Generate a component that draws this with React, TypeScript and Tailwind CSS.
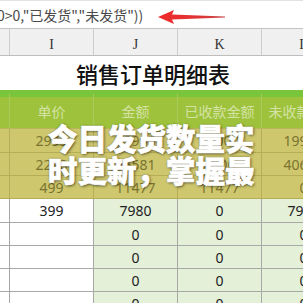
import React from 'react';

const cjk = "font-['Noto_Sans_CJK_SC','Noto_Sans',sans-serif]";
const num = "font-['Noto_Sans','Liberation_Sans',sans-serif]";

type Row = { cells: string[]; band: boolean; h: string };

const rows: Row[] = [
  { cells: ['2999', '29990', '10000', '19990'], band: true, h: 'h-[24px]' },
  { cells: ['2290', '45581', '4900', '40681'], band: true, h: 'h-[23px]' },
  { cells: ['499', '11477', '11477', '0'], band: true, h: 'h-[23px]' },
  { cells: ['399', '7980', '0', '7980'], band: false, h: 'h-[24px]' },
  { cells: ['', '0', '0', '0'], band: false, h: 'h-[23px]' },
  { cells: ['', '0', '0', '0'], band: false, h: 'h-[23px]' },
  { cells: ['', '0', '0', '0'], band: false, h: 'h-[23px]' },
  { cells: ['', '0', '0', '0'], band: false, h: 'h-[23px]' },
];

const RedArrow = () => (
  <svg width="67" height="16" viewBox="0 0 67 16" className="ml-[15px] mt-[4px] shrink-0">
    <defs>
      <linearGradient id="arrowFill" x1="0" y1="0" x2="1" y2="0">
        <stop offset="0" stopColor="#f02a2a" />
        <stop offset="0.6" stopColor="#e03434" />
        <stop offset="1" stopColor="#c84a4a" />
      </linearGradient>
    </defs>
    <path d="M0 8 L16 1 L14 5.6 L67 7.4 L67 8.4 L14 10.6 L16 15 Z" fill="url(#arrowFill)" />
  </svg>
);

export default function App() {
  return (
    <div className="relative w-[303px] h-[303px] overflow-hidden bg-white">
      {/* formula bar */}
      <div className="flex items-center h-[29px] border-t border-b border-t-[#e2e2e2] border-b-[#c4c4c4] bg-white">
        <span className={`${cjk} text-[14px] text-[#4a4a4a] whitespace-nowrap -ml-[3px] pt-[2px]`}>
          0&gt;0,"已发货","未发货"))
        </span>
        <RedArrow />
      </div>

      {/* column letters */}
      <div className="grid grid-cols-[9px_84px_84px_84px_84px] h-[27px] bg-[#f0f0f0] border-b border-[#bdbdbd] font-['Liberation_Serif',serif] text-[14px] text-[#333]">
        <div />
        {['I', 'J', 'K', 'L'].map((c) => (
          <div key={c} className="flex items-center justify-center pt-[4px] border-l border-[#cdcdcd]">
            {c}
          </div>
        ))}
      </div>

      {/* title */}
      <div className={`${cjk} h-[34px] flex items-center justify-center pl-[3px] text-[22px] font-medium text-[#111]`}>
        销售订单明细表
      </div>

      {/* table header */}
      <div className="border-t-[7px] border-[#79c63c]">
        <div className={`${cjk} grid grid-cols-[9px_84px_84px_84px_84px] h-[32px] bg-[#9ec23c] border-b border-[#b7b65a] text-[14px] text-[#d4e3a4]`}>
          <div />
          {['单价', '金额', '已收款金额', '未收款金额'].map((t) => (
            <div key={t} className="flex items-center justify-center whitespace-nowrap border-l border-[#a9c95a] -mt-[3px]">
              {t}
            </div>
          ))}
        </div>
      </div>

      {/* data rows */}
      {rows.map((r, i) => (
        <div
          key={i}
          className={`${num} grid grid-cols-[9px_84px_84px_84px_84px] ${r.h} text-[14px] border-b ${
            r.band ? 'bg-[#cec76d] border-[#b6ae56] text-[#7a7430]' : 'border-[#a8a8a8] text-[#222]'
          }`}
        >
          <div />
          {r.cells.map((c, j) => (
            <div
              key={j}
              className={`flex items-center justify-center whitespace-nowrap border-l ${
                r.band ? 'border-[#b6ae56]' : 'border-[#a8a8a8]'
              } ${!r.band && j > 0 ? 'bg-[#e4f0d8]' : ''}`}
            >
              {c}
            </div>
          ))}
        </div>
      ))}

      {/* caption overlay */}
      <div
        className={`${cjk} absolute left-[48px] top-[121px] text-[29.5px] leading-[32px] font-black text-white whitespace-nowrap [-webkit-text-stroke:0.7px_white] [text-shadow:1px_1px_3px_rgba(0,0,0,0.6),0_0_2px_rgba(0,0,0,0.35)]`}
      >
        <div>今日发货数量实</div>
        <div>时更新，掌握最</div>
      </div>
    </div>
  );
}
